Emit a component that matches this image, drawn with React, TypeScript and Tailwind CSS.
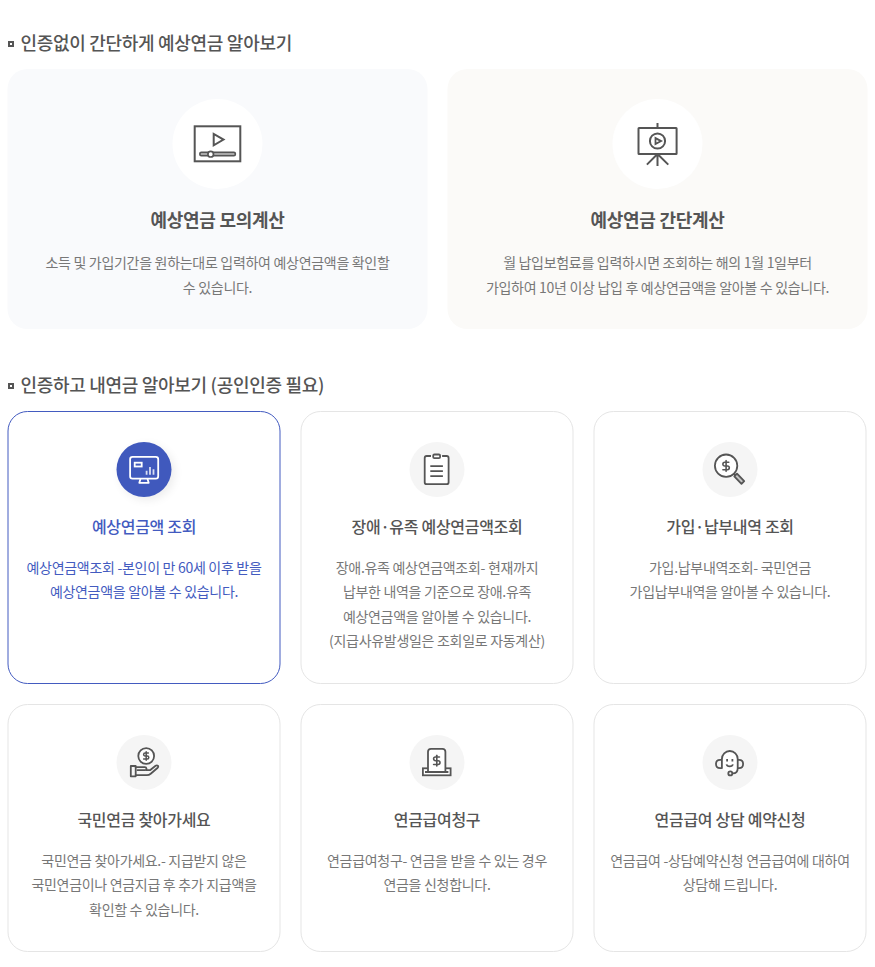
import React from 'react';
import { clsx } from 'clsx';
import { DollarSign } from 'lucide-react';

const IconVideo = () => (
  <svg viewBox="0 0 90 90" className="size-full" fill="none" stroke="currentColor" strokeWidth="2">
    <rect x="22.2" y="27.3" width="45.6" height="35" />
    <path d="M41.2 34.9v11.4l9.8-5.7z" />
    <rect x="27.4" y="53.4" width="35.4" height="3.2" rx="1.4" fill="#c4c4c4" strokeWidth="1.7" />
    <circle cx="38.2" cy="55.2" r="2.8" fill="#fff" strokeWidth="1.7" />
  </svg>
);

const IconBoard = () => (
  <svg viewBox="0 0 90 90" className="size-full" fill="none" stroke="currentColor" strokeWidth="2">
    <path d="M45 24v4M45 55v12M44.5 55.5L34.4 65.6M45.5 55.5l10.3 10.1" />
    <rect x="26" y="29" width="38.1" height="26" rx="0.5" />
    <circle cx="45" cy="42" r="7.6" />
    <path d="M43 39.1v6l5.6-3z" strokeWidth="1.8" />
  </svg>
);

const IconMonitor = () => (
  <svg viewBox="0 0 55 55" className="size-full" fill="none" stroke="currentColor" strokeWidth="1.8">
    <rect x="13.6" y="14.9" width="28.1" height="21.8" rx="2.4" />
    <rect x="18.2" y="20.7" width="7" height="3.8" />
    <path d="M30.1 32.8v-4M33.5 32.8v-7.8M37 32.8v-5.5" opacity="0.8" />
    <path d="M24 36.9l-1.2 3.9h9.4L31 36.9" strokeLinejoin="round" />
  </svg>
);

const IconClipboard = () => (
  <svg viewBox="0 0 55 55" className="size-full" fill="none" stroke="currentColor" strokeWidth="1.8">
    <path d="M21.5 14H17.2a2 2 0 0 0-2 2v24.2a2 2 0 0 0 2 2h19.9a2 2 0 0 0 2-2V16a2 2 0 0 0-2-2h-4.5" fill="#fff" />
    <rect x="23.7" y="12.5" width="6.9" height="3.7" rx="1.2" fill="#fff" />
    <path d="M20.8 24.2h12.6M20.8 29.2h12.6M20.8 34.2h12.6" />
  </svg>
);

const IconSearch = () => (
  <svg viewBox="0 0 55 55" className="size-full" fill="none" stroke="currentColor" strokeWidth="1.8">
    <circle cx="23.6" cy="23.7" r="11.2" fill="#fff" />
    <path d="M31.3 31.5l2 2M34.5 31.6l7.2 7.6-2.7 2.7-7.2-7.6z" fill="#c4c4c4" strokeLinejoin="round" />
    <DollarSign x="17.2" y="17.6" width="12.8" height="12.8" strokeWidth={3} />
  </svg>
);

const IconHand = () => (
  <svg viewBox="0 0 55 55" className="size-full" fill="none" stroke="currentColor" strokeWidth="1.8" strokeLinejoin="round">
    <circle cx="29.7" cy="21" r="7.9" fill="#fff" />
    <DollarSign x="24.5" y="15.8" width="10.4" height="10.4" strokeWidth={3.4} />
    <path d="M14.3 31h4.9v10.3h-4.9z" />
    <path d="M19.2 32.2h9.1c1.9 0 2.5 3 .3 3h-7.6" strokeLinecap="round" />
    <path d="M30.3 35.2h3.2l5.6-4.4c1.7-1.2 3.6.4 2.1 1.9l-7 6c-1.2 1-2.3 1.4-3.8 1.4H19.2" strokeLinecap="round" />
  </svg>
);

const IconClaim = () => (
  <svg viewBox="0 0 55 55" className="size-full" fill="none" stroke="currentColor" strokeWidth="1.8">
    <rect x="13.4" y="33.3" width="27.7" height="7" fill="#fff" />
    <path d="M18.5 37V16.8a3 3 0 0 1 3-3h11.4a3 3 0 0 1 3 3V37" fill="#fff" />
    <path d="M15.5 37h23.4" />
    <DollarSign x="20.9" y="19.3" width="12.8" height="12.8" strokeWidth={3} />
  </svg>
);

const IconHeadset = () => (
  <svg viewBox="0 0 55 55" className="size-full" fill="none" stroke="currentColor" strokeWidth="1.8">
    <path d="M19.4 33.8V23.9a7.9 7.9 0 0 1 15.8 0v9.4c0 3-1.9 5.1-4.9 5.1" fill="#fff" />
    <path d="M19.4 24.8h-1.8c-2.6 0-4.1 1.8-4.1 4.2s1.5 4.2 4.1 4.2h1.8M35.3 24.8h1.2c2.6 0 4.1 1.8 4.1 4.2s-1.5 4.2-4.1 4.2h-1.2" />
    <circle cx="27.8" cy="38.4" r="2" />
    <path d="M24.6 24v2.4M29.9 24v2.4M24 29.4c.6 2.5 5.8 2.5 6.4 0" />
  </svg>
);

const simpleCards = [
  {
    title: '예상연금 모의계산',
    lines: ['소득 및 가입기간을 원하는대로 입력하여 예상연금액을 확인할', '수 있습니다.'],
    icon: <IconVideo />,
    bg: 'bg-[#f9fafc]',
  },
  {
    title: '예상연금 간단계산',
    lines: ['월 납입보험료를 입력하시면 조회하는 해의 1월 1일부터', '가입하여 10년 이상 납입 후 예상연금액을 알아볼 수 있습니다.'],
    icon: <IconBoard />,
    bg: 'bg-[#fbfaf8]',
  },
];

const authCards = [
  {
    title: '예상연금액 조회',
    lines: ['예상연금액조회 -본인이 만 60세 이후 받을', '예상연금액을 알아볼 수 있습니다.'],
    icon: <IconMonitor />,
    active: true,
  },
  {
    title: '장애·유족 예상연금액조회',
    lines: ['장애.유족 예상연금액조회- 현재까지', '납부한 내역을 기준으로 장애.유족', '예상연금액을 알아볼 수 있습니다.', '(지급사유발생일은 조회일로 자동계산)'],
    icon: <IconClipboard />,
  },
  {
    title: '가입·납부내역 조회',
    lines: ['가입.납부내역조회- 국민연금', '가입납부내역을 알아볼 수 있습니다.'],
    icon: <IconSearch />,
  },
  {
    title: '국민연금 찾아가세요',
    lines: ['국민연금 찾아가세요.- 지급받지 않은', '국민연금이나 연금지급 후 추가 지급액을', '확인할 수 있습니다.'],
    icon: <IconHand />,
  },
  {
    title: '연금급여청구',
    lines: ['연금급여청구- 연금을 받을 수 있는 경우', '연금을 신청합니다.'],
    icon: <IconClaim />,
  },
  {
    title: '연금급여 상담 예약신청',
    lines: ['연금급여 -상담예약신청 연금급여에 대하여', '상담해 드립니다.'],
    icon: <IconHeadset />,
  },
];

const SectionTitle: React.FC<{ children: React.ReactNode }> = ({ children }) => (
  <h2 className="flex h-[26px] items-center gap-[7px] text-[18px] font-medium leading-[26px] text-[#555]">
    <span className="mt-1 size-1.5 translate-x-[0.5px] border-2 border-[#555]" />
    {children}
  </h2>
);

const Lines: React.FC<{ lines: string[] }> = ({ lines }) => (
  <p className="text-sm leading-[24.5px] whitespace-nowrap">
    {lines.map((line) => (
      <span key={line} className="block">{line}</span>
    ))}
  </p>
);

export default function App() {
  return (
    <main className="ml-2 h-[967px] w-[860px] -translate-x-[0.5px] bg-white pt-[29px] font-['Noto_Sans_CJK_KR','Noto_Sans',sans-serif] tracking-[-0.3px] text-[#777]">
      <section>
        <SectionTitle>인증없이 간단하게 예상연금 알아보기</SectionTitle>
        <div className="mt-3.5 grid grid-cols-2 gap-5">
          {simpleCards.map((card) => (
            <div key={card.title} className={clsx('flex h-[260px] flex-col items-center rounded-[20px] pt-[30px] text-center', card.bg)}>
              <div className="size-[90px] rounded-full bg-white text-[#555]">{card.icon}</div>
              <h3 className="my-[17px] text-[18px] leading-[27px] font-bold text-[#555]">{card.title}</h3>
              <Lines lines={card.lines} />
            </div>
          ))}
        </div>
      </section>

      <section className="mt-[42px]">
        <SectionTitle>인증하고 내연금 알아보기 (공인인증 필요)</SectionTitle>
        <div className="mt-3.5 grid grid-cols-[repeat(3,273px)] grid-rows-[273px_248px] gap-5">
          {authCards.map((card) => (
            <div
              key={card.title}
              className={clsx(
                'flex flex-col items-center rounded-[20px] border pt-[30px] text-center',
                card.active ? 'border-[#435bc0] text-[#435bc0]' : 'border-[#e5e5e5]'
              )}
            >
              <div
                className={clsx(
                  'size-[55px] rounded-full',
                  card.active ? 'bg-[#4059bd] text-white shadow-[3px_3px_10px_rgba(0,0,0,0.08)]' : 'bg-[#f5f5f5] text-[#555]'
                )}
              >
                {card.icon}
              </div>
              <h3 className={clsx('mt-[17px] mb-[16.5px] text-base leading-6 font-medium', !card.active && 'text-[#555]')}>{card.title}</h3>
              <Lines lines={card.lines} />
            </div>
          ))}
        </div>
      </section>
    </main>
  );
}
